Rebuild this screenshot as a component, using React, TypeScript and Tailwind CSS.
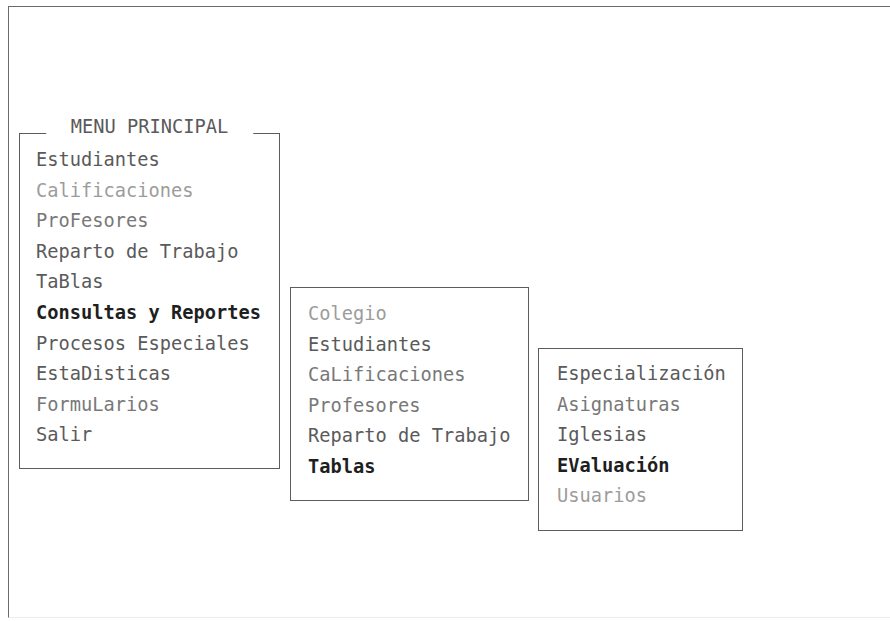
type Item = { label: string; tone: 'dark' | 'mid' | 'soft' | 'light' };

const mainMenu: Item[] = [
  { label: 'Estudiantes', tone: 'mid' },
  { label: 'Calificaciones', tone: 'light' },
  { label: 'ProFesores', tone: 'soft' },
  { label: 'Reparto de Trabajo', tone: 'mid' },
  { label: 'TaBlas', tone: 'mid' },
  { label: 'Consultas y Reportes', tone: 'dark' },
  { label: 'Procesos Especiales', tone: 'mid' },
  { label: 'EstaDisticas', tone: 'mid' },
  { label: 'FormuLarios', tone: 'soft' },
  { label: 'Salir', tone: 'mid' },
];

const reportMenu: Item[] = [
  { label: 'Colegio', tone: 'light' },
  { label: 'Estudiantes', tone: 'mid' },
  { label: 'CaLificaciones', tone: 'soft' },
  { label: 'Profesores', tone: 'soft' },
  { label: 'Reparto de Trabajo', tone: 'mid' },
  { label: 'Tablas', tone: 'dark' },
];

const tablesMenu: Item[] = [
  { label: 'Especialización', tone: 'mid' },
  { label: 'Asignaturas', tone: 'soft' },
  { label: 'Iglesias', tone: 'mid' },
  { label: 'EValuación', tone: 'dark' },
  { label: 'Usuarios', tone: 'light' },
];

const toneClass = {
  dark: 'text-[#1f1f1f] font-bold',
  mid: 'text-[#5a5a5a]',
  soft: 'text-[#787878]',
  light: 'text-[#9c9c9c]',
};

function MenuList({ items }: { items: Item[] }) {
  return (
    <ul className="flex flex-col">
      {items.map((item) => (
        <li key={item.label} className={`whitespace-pre leading-[30.6px] ${toneClass[item.tone]}`}>
          {item.label}
        </li>
      ))}
    </ul>
  );
}

export default function App() {
  return (
    <div className="h-[621px] w-[890px] overflow-hidden bg-white font-['DejaVu_Sans_Mono','Liberation_Mono',monospace] text-[18.7px]">
      <div className="ml-2 mt-1.5 flex h-[612px] w-[900px] items-start border-l border-t border-b border-l-[#6b6b6b] border-t-[#6b6b6b] border-b-[#ececec]">
        {/* Menu principal */}
        <div className="relative ml-[10px] mt-[126px] h-[336px] w-[261px] shrink-0 border border-[#5c5c5c] pl-4 pt-[11px]">
          <span className="absolute left-1/2 top-[-17px] -translate-x-1/2 whitespace-pre bg-white px-[25px] leading-[20px] text-[#5a5a5a]">
            MENU PRINCIPAL
          </span>
          <MenuList items={mainMenu} />
        </div>

        {/* Consultas y reportes */}
        <div className="ml-[10px] mt-[280px] h-[214px] w-[239px] shrink-0 border border-[#5c5c5c] pl-[17px] pt-[11px]">
          <MenuList items={reportMenu} />
        </div>

        {/* Tablas */}
        <div className="ml-[9px] mt-[341px] h-[183px] w-[205px] shrink-0 border border-[#5c5c5c] pl-[18px] pt-[10px]">
          <MenuList items={tablesMenu} />
        </div>
      </div>
    </div>
  );
}
